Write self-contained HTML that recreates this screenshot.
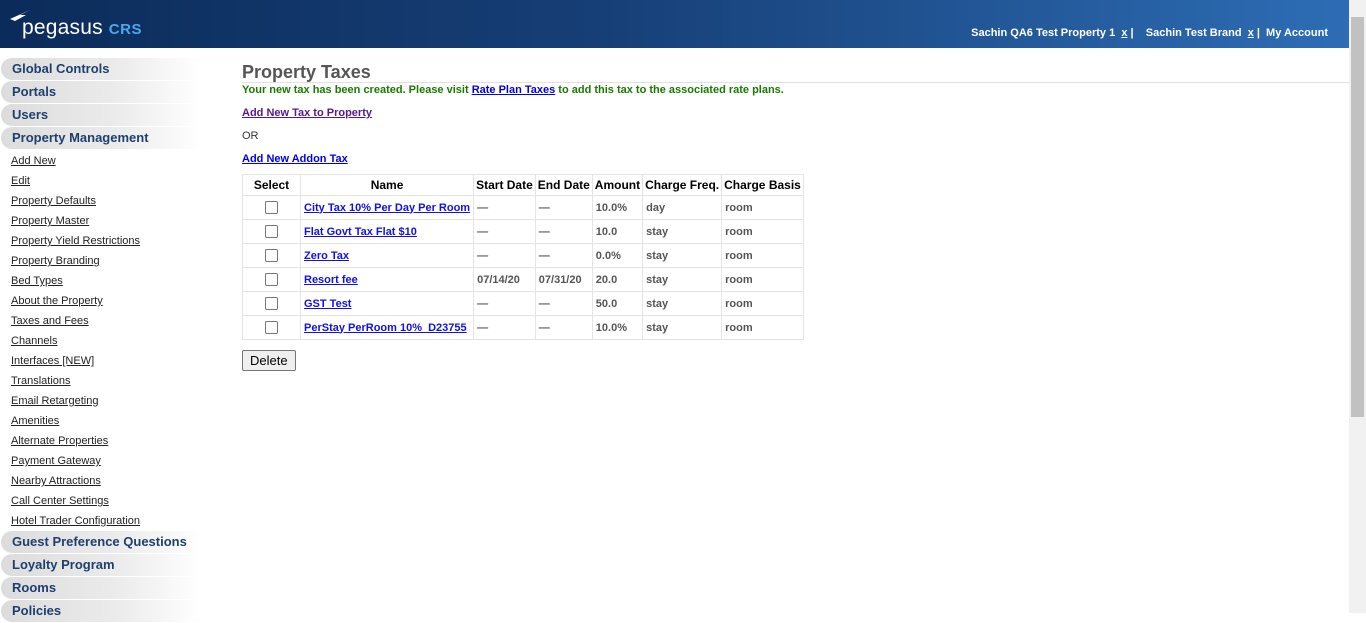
<!DOCTYPE html>
<html><head><meta charset="utf-8"><style>
*{box-sizing:border-box}
body{margin:0;width:1366px;height:613px;overflow:hidden;font-family:"Liberation Sans",Arial,sans-serif;background:#fff;position:relative}
#hdr{position:absolute;left:0;top:0;width:1349px;height:48px;background:linear-gradient(90deg,#0b2c5a 0%,#173f77 45%,#2d6db5 100%)}
#logo{position:absolute;left:22px;top:16px;color:#fff;font-size:21px;font-weight:normal;letter-spacing:0.2px}
#logo span{color:#4aa8ec;font-size:15px;font-weight:bold;margin-left:6px;letter-spacing:0.5px}
#acct{position:absolute;right:21px;top:27px;color:#fff;font-size:11px;font-weight:bold}
#sb{position:absolute;right:0;top:0;width:17px;height:613px;background:#f1f1f1}
#sb div{position:absolute;left:2px;top:17px;width:13px;height:400px;background:#c1c1c1}
#side{position:absolute;left:1px;top:58px;width:200px}
.h{height:22px;margin-bottom:1px;border-radius:11px 0 0 11px;background:linear-gradient(90deg,#dcdcdc 0%,#ececec 60%,#fff 100%);color:#1f3f6e;font-weight:bold;font-size:13px;line-height:22px;padding-left:11px}
.l{display:block;font-size:11px;color:#222;text-decoration:underline;height:20px;line-height:20px;padding-left:10px}
#main{position:absolute;left:242px;top:61px;font-size:11px;color:#333}
h1{margin:0;font-size:18px;color:#555;font-weight:bold;height:22px;line-height:22px}
#hr{position:absolute;left:242px;top:82px;width:1107px;height:1px;background:#e2e2e2}
.ln{height:23px;line-height:14px}
.msg{color:#1a7a00;font-weight:bold;height:23px;line-height:14px;margin-top:0}
a{color:#0000ee;font-weight:bold}
.v{color:#551a8b}
table{border-collapse:collapse;margin-top:-1px;font-size:11px}
td,th{border:1px solid #e4e4e4;height:24px;padding:0 3px;text-align:left;color:#555;font-weight:bold;white-space:nowrap}
th{color:#000;font-size:12px;text-align:center;height:21px;padding:0 2px}
td a{color:#1010ee}
.cb{display:inline-block;width:13px;height:13px;border:1px solid #767676;border-radius:2px;vertical-align:middle}
button{margin-top:10px;font-family:inherit;font-size:13px;padding:1px 7px;border:1px solid #767676;border-radius:2px;background:#efefef;height:21px}
</style></head><body>
<div id="hdr">
<svg style="position:absolute;left:9px;top:10px" width="22" height="12" viewBox="0 0 22 12"><path d="M1 9 L21 0 L11 5 L17 5 L6 11 Z" fill="#fff"/></svg>
<div id="logo">pegasus<span>CRS</span></div>
<div id="acct">Sachin QA6 Test Property 1 &nbsp;<u>x</u>&nbsp;|&nbsp;&nbsp;&nbsp; Sachin Test Brand &nbsp;<u>x</u>&nbsp;|&nbsp; My Account</div>
</div>
<div id="sb"><div></div></div>
<div id="side">
<div class="h">Global Controls</div><div class="h">Portals</div><div class="h">Users</div><div class="h">Property Management</div>
<div style="height:1px"></div>
<span class="l">Add New</span><span class="l">Edit</span><span class="l">Property Defaults</span><span class="l">Property Master</span><span class="l">Property Yield Restrictions</span><span class="l">Property Branding</span><span class="l">Bed Types</span><span class="l">About the Property</span><span class="l">Taxes and Fees</span><span class="l">Channels</span><span class="l">Interfaces [NEW]</span><span class="l">Translations</span><span class="l">Email Retargeting</span><span class="l">Amenities</span><span class="l">Alternate Properties</span><span class="l">Payment Gateway</span><span class="l">Nearby Attractions</span><span class="l">Call Center Settings</span><span class="l">Hotel Trader Configuration</span>
<div class="h">Guest Preference Questions</div><div class="h">Loyalty Program</div><div class="h">Rooms</div><div class="h">Policies</div>
</div>
<div id="hr"></div>
<div id="main">
<h1>Property Taxes</h1>
<div class="msg">Your new tax has been created. Please visit <a href="#">Rate Plan Taxes</a> to add this tax to the associated rate plans.</div>
<div class="ln"><a class="v" href="#">Add New Tax to Property</a></div>
<div class="ln">OR</div>
<div class="ln"><a href="#">Add New Addon Tax</a></div>
<table>
<tr><th style="width:58px">Select</th><th style="width:172px">Name</th><th>Start Date</th><th>End Date</th><th>Amount</th><th>Charge Freq.</th><th>Charge Basis</th></tr>
<tr><td style="text-align:center"><span class="cb"></span></td><td><a href="#">City Tax 10% Per Day Per Room</a></td><td>—</td><td>—</td><td>10.0%</td><td>day</td><td>room</td></tr>
<tr><td style="text-align:center"><span class="cb"></span></td><td><a href="#">Flat Govt Tax Flat $10</a></td><td>—</td><td>—</td><td>10.0</td><td>stay</td><td>room</td></tr>
<tr><td style="text-align:center"><span class="cb"></span></td><td><a href="#">Zero Tax</a></td><td>—</td><td>—</td><td>0.0%</td><td>stay</td><td>room</td></tr>
<tr><td style="text-align:center"><span class="cb"></span></td><td><a href="#">Resort fee</a></td><td>07/14/20</td><td>07/31/20</td><td>20.0</td><td>stay</td><td>room</td></tr>
<tr><td style="text-align:center"><span class="cb"></span></td><td><a href="#">GST Test</a></td><td>—</td><td>—</td><td>50.0</td><td>stay</td><td>room</td></tr>
<tr><td style="text-align:center"><span class="cb"></span></td><td><a href="#">PerStay PerRoom 10%_D23755</a></td><td>—</td><td>—</td><td>10.0%</td><td>stay</td><td>room</td></tr>
</table>
<button>Delete</button>
</div>
</body></html>
